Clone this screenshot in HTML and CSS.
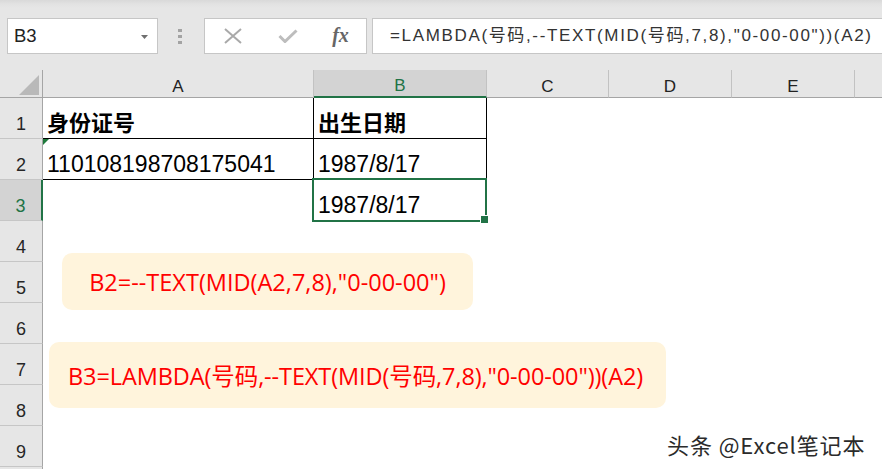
FILE: index.html
```html
<!DOCTYPE html>
<html lang="zh">
<head>
<meta charset="utf-8">
<title>Excel LAMBDA</title>
<link rel="stylesheet" href="styles.css">
</head>
<body>
<div class="app">
  <div class="toolbar">
    <div class="namebox">
      <span class="ref">B3</span>
      <svg class="caret" width="7" height="4" viewBox="0 0 7 4"><path d="M0 0H7L3.5 4Z" fill="#6f6f6f"/></svg>
    </div>
    <div class="grip"><i></i><i></i><i></i></div>
    <div class="fbtns">
      <svg class="ico" width="20" height="16" viewBox="0 0 20 16"><path d="M2 1L18 15M18 1L2 15" stroke="#a9a9a9" stroke-width="2" fill="none"/></svg>
      <svg class="ico" width="20" height="14" viewBox="0 0 20 14"><path d="M1.5 7L7 12.5L18.5 1.5" stroke="#bdbdbd" stroke-width="3" fill="none"/></svg>
      <span class="fx">fx</span>
    </div>
    <div class="formula">=LAMBDA(号码,--TEXT(MID(号码,7,8),"0-00-00"))(A2)</div>
  </div>

  <div class="grid">
    <div class="corner"><svg width="20" height="20" viewBox="0 0 20 20"><path d="M20 0V20H0Z" fill="#b9b9b9"/></svg></div>
    <div class="hd">A</div>
    <div class="hd hd-sel">B</div>
    <div class="hd">C</div>
    <div class="hd">D</div>
    <div class="hd">E</div>
    <div class="hd hd-last"></div>

    <div class="rh">1</div>
    <div class="c bold bt-r bt-b">身份证号</div>
    <div class="c bold bt-r bt-b">出生日期</div>
    <div class="c"></div><div class="c"></div><div class="c"></div><div class="c"></div>

    <div class="rh">2</div>
    <div class="c bt-r bt-b txtnum">110108198708175041</div>
    <div class="c bt-r bt-b">1987/8/17</div>
    <div class="c"></div><div class="c"></div><div class="c"></div><div class="c"></div>

    <div class="rh rh-sel">3</div>
    <div class="c"></div>
    <div class="c active">1987/8/17</div>
    <div class="c"></div><div class="c"></div><div class="c"></div><div class="c"></div>

    <div class="rh">4</div>
    <div class="c"></div><div class="c"></div><div class="c"></div><div class="c"></div><div class="c"></div><div class="c"></div>
    <div class="rh">5</div>
    <div class="c"></div><div class="c"></div><div class="c"></div><div class="c"></div><div class="c"></div><div class="c"></div>
    <div class="rh">6</div>
    <div class="c"></div><div class="c"></div><div class="c"></div><div class="c"></div><div class="c"></div><div class="c"></div>
    <div class="rh">7</div>
    <div class="c"></div><div class="c"></div><div class="c"></div><div class="c"></div><div class="c"></div><div class="c"></div>
    <div class="rh">8</div>
    <div class="c"></div><div class="c"></div><div class="c"></div><div class="c"></div><div class="c"></div><div class="c"></div>
    <div class="rh">9</div>
    <div class="c"></div><div class="c"></div><div class="c"></div><div class="c"></div><div class="c"></div><div class="c"></div>
    <div class="rh"></div>
    <div class="c"></div><div class="c"></div><div class="c"></div><div class="c"></div><div class="c"></div><div class="c"></div>
  </div>

  <div class="note note-1">B2=--TEXT(MID(A2,7,8),"0-00-00")</div>
  <div class="note note-2">B3=LAMBDA(号码,--TEXT(MID(号码,7,8),"0-00-00"))(A2)</div>
  <div class="watermark">头条 @Excel笔记本</div>
</div>
</body>
</html>
```
FILE: styles.css
```css
* { box-sizing: border-box; }
html, body { margin: 0; padding: 0; background: #fff; }
body { width: 882px; height: 469px; overflow: hidden; font-family: "Liberation Sans", "Noto Sans CJK SC", sans-serif; }

.app { position: relative; width: 882px; height: 469px; overflow: hidden; }

/* toolbar */
.toolbar {
  height: 70px;
  display: flex;
  align-items: flex-start;
  padding-top: 18px;
  background: linear-gradient(#d9d9d9 0, #e2e2e2 4px, #e6e6e6 8px);
}
.namebox {
  margin-left: 7px;
  width: 151px;
  height: 36px;
  background: #fff;
  border: 1px solid #c6c6c6;
  display: flex;
  align-items: center;
  justify-content: space-between;
  padding: 0 9px 0 6px;
}
.ref { font-size: 18.5px; color: #222; }
.caret { margin-top: 1px; }
.grip {
  margin-left: 20px;
  width: 4px;
  height: 36px;
  display: flex;
  flex-direction: column;
  justify-content: center;
  gap: 3px;
}
.grip i { display: block; width: 4px; height: 3px; background: #a3a3a3; }
.fbtns {
  margin-left: 22px;
  width: 163px;
  height: 36px;
  background: #fff;
  border: 1px solid #c6c6c6;
  display: grid;
  grid-template-columns: 55px 55px 51px;
  align-items: center;
  justify-items: center;
}
.fx {
  font-family: "Liberation Serif", serif;
  font-style: italic;
  font-weight: bold;
  font-size: 20px;
  color: #666;
  margin-top: -2px;
}
.formula {
  margin-left: 5px;
  margin-right: -30px;
  flex: 1;
  height: 36px;
  background: #fff;
  border: 1px solid #c6c6c6;
  padding-left: 17px;
  font-size: 17px;
  letter-spacing: 1.65px;
  color: #333;
  line-height: 33px;
  white-space: nowrap;
}

/* sheet grid */
.grid {
  display: grid;
  grid-template-columns: 43px 271px 173px 122px 123px 123px 27px;
  grid-template-rows: 28px repeat(10, 41px);
  background: #fff;
}
.corner {
  background: #e6e6e6;
  border-right: 1px solid #a5a5a5;
  border-bottom: 1px solid #a5a5a5;
  display: flex;
  align-items: flex-end;
  justify-content: flex-end;
  padding: 0 3px 2px 0;
}
.hd {
  background: #e6e6e6;
  border-right: 1px solid #c2c2c2;
  border-bottom: 1px solid #a5a5a5;
  display: flex;
  align-items: flex-end;
  justify-content: center;
  font-size: 17px;
  line-height: 20px;
  color: #222;
}
.hd-sel {
  background: #d3d3d3;
  color: #217346;
  border-bottom: 2px solid #217346;
}
.hd-last { border-right: none; }
.rh {
  background: #e6e6e6;
  border-right: 1px solid #a5a5a5;
  border-bottom: 1px solid #c6c6c6;
  display: flex;
  align-items: flex-end;
  justify-content: center;
  font-size: 18px;
  line-height: 22px;
  padding-bottom: 3px;
  color: #262626;
}
.rh-sel {
  background: #d3d3d3;
  color: #217346;
  border-right: 2px solid #217346;
}
.c {
  position: relative;
  display: flex;
  align-items: flex-end;
  padding: 0 0 1px 4px;
  font-size: 23px;
  line-height: 27px;
  color: #000;
  white-space: nowrap;
}
.active { padding-bottom: 2px; }
.bold { font-weight: bold; font-size: 22px; }
.bt-r { border-right: 1px solid #000; }
.bt-b { border-bottom: 1px solid #000; }
.txtnum::before {
  content: "";
  position: absolute;
  left: 0;
  top: 0;
  border-top: 6px solid #1f7a3c;
  border-right: 6px solid transparent;
}
.active::after {
  content: "";
  position: absolute;
  left: -2px;
  top: -2px;
  right: 0;
  bottom: -1px;
  border: 2px solid #217346;
}
.active::before {
  content: "";
  position: absolute;
  right: -2px;
  bottom: -3px;
  width: 7px;
  height: 7px;
  background: #217346;
  border: 1px solid #fff;
  z-index: 1;
}

/* callouts */
.note {
  position: absolute;
  background: #fff4dc;
  border-radius: 10px;
  color: #ff0000;
  font-family: "Open Sans", "Noto Sans CJK SC", sans-serif;
  font-size: 23.5px;
  display: flex;
  align-items: center;
  white-space: nowrap;
}
.note-1 { left: 62px; top: 253px; width: 411px; height: 57px; justify-content: center; }
.note-2 { left: 49px; top: 342px; width: 617px; height: 66px; padding-left: 19px; letter-spacing: -0.1px; }

.watermark {
  position: absolute;
  left: 667px;
  top: 428px;
  font-family: "Noto Sans CJK SC", sans-serif;
  font-size: 22px;
  letter-spacing: 0.9px;
  color: #2b2b2b;
  white-space: nowrap;
  text-shadow: 1px 1px 0 #fff, -1px 0 0 rgba(255,255,255,0.7);
}
```
